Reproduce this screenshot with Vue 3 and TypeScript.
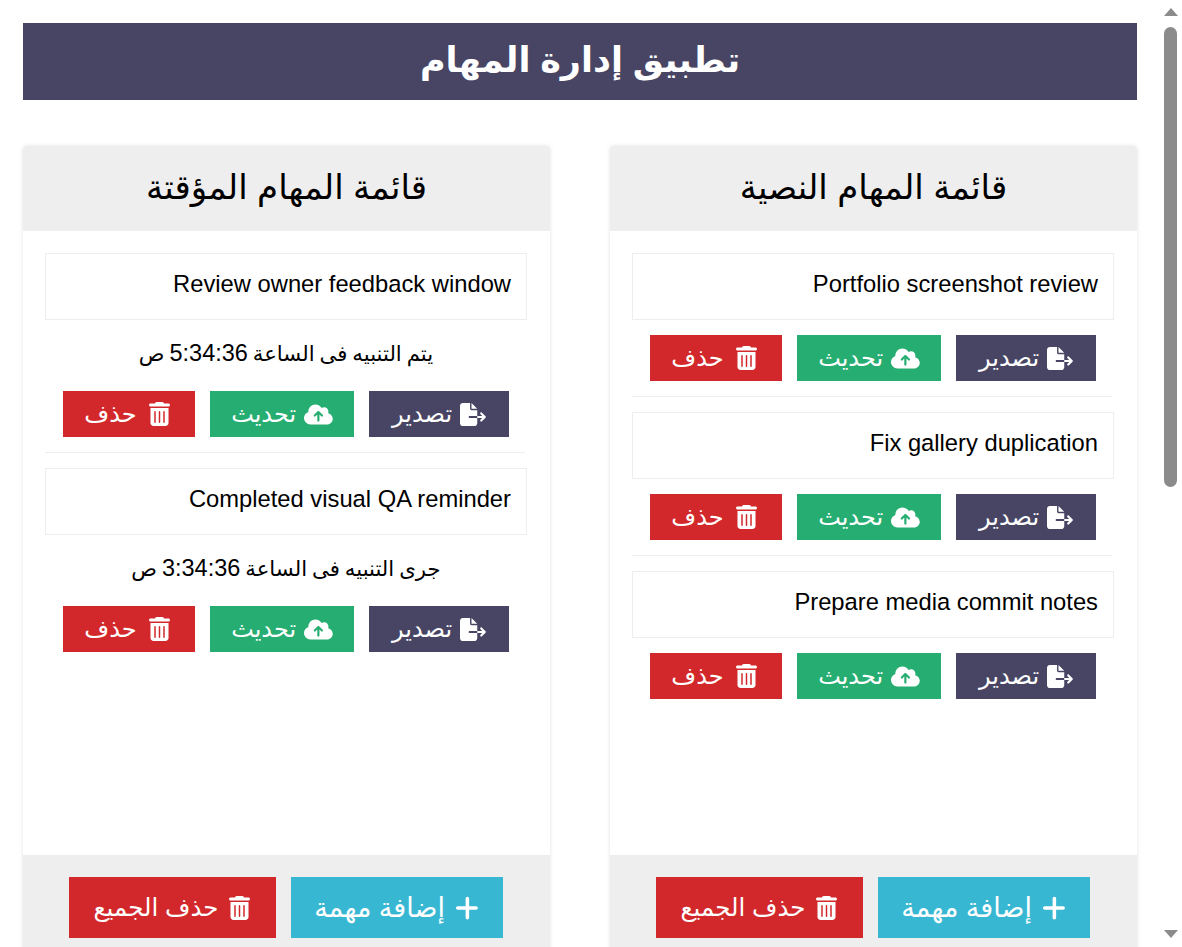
<script setup lang="ts">
interface Task { text: string; alarm?: { label: string; time: string } }
const lists: { title: string; tasks: Task[] }[] = [
  {
    title: 'قائمة المهام النصية',
    tasks: [
      { text: 'Portfolio screenshot review' },
      { text: 'Fix gallery duplication' },
      { text: 'Prepare media commit notes' },
    ],
  },
  {
    title: 'قائمة المهام المؤقتة',
    tasks: [
      { text: 'Review owner feedback window', alarm: { label: 'يتم التنبيه فى الساعة', time: '5:34:36' } },
      { text: 'Completed visual QA reminder', alarm: { label: 'جرى التنبيه فى الساعة', time: '3:34:36' } },
    ],
  },
]
const icons = {
  exportFile: { box: '0 0 576 512', d: 'M0 64C0 28.7 28.7 0 64 0H224V128c0 17.7 14.3 32 32 32H384V288H216c-13.3 0-24 10.7-24 24s10.7 24 24 24H384V448c0 35.3-28.7 64-64 64H64c-35.3 0-64-28.7-64-64V64zM384 336V288H494.1l-39-39c-9.4-9.4-9.4-24.6 0-33.9s24.6-9.4 33.9 0l80 80c9.4 9.4 9.4 24.6 0 33.9l-80 80c-9.4 9.4-24.6 9.4-33.9 0s-9.4-24.6 0-33.9l39-39H384zm0-208H256V0L384 128z' },
  cloud: { box: '0 0 640 512', d: 'M144 480C64.5 480 0 415.5 0 336c0-62.8 40.2-116.2 96.2-135.9c-.1-2.7-.2-5.4-.2-8.1c0-88.4 71.6-160 160-160c59.3 0 111 32.2 138.7 80.2C409.9 102 428.3 96 448 96c53 0 96 43 96 96c0 12.2-2.3 23.8-6.4 34.6C596 238.4 640 290.1 640 352c0 70.7-57.3 128-128 128H144zm79-217c-9.4 9.4-9.4 24.6 0 33.9s24.6 9.4 33.9 0l39-39V392c0 13.3 10.7 24 24 24s24-10.7 24-24V257.9l39 39c9.4 9.4 24.6 9.4 33.9 0s9.4-24.6 0-33.9l-80-80c-9.4-9.4-24.6-9.4-33.9 0l-80 80z' },
  trash: { box: '0 0 448 512', d: 'M135.2 17.7C140.6 6.8 151.7 0 163.8 0H284.2c12.1 0 23.2 6.8 28.6 17.7L320 32h96c17.7 0 32 14.3 32 32s-14.3 32-32 32H32C14.3 96 0 81.7 0 64S14.3 32 32 32h96l7.2-14.3zM32 128H416V448c0 35.3-28.7 64-64 64H96c-35.3 0-64-28.7-64-64V128zm96 64c-8.8 0-16 7.2-16 16V432c0 8.8 7.2 16 16 16s16-7.2 16-16V208c0-8.8-7.2-16-16-16zm96 0c-8.8 0-16 7.2-16 16V432c0 8.8 7.2 16 16 16s16-7.2 16-16V208c0-8.8-7.2-16-16-16zm96 0c-8.8 0-16 7.2-16 16V432c0 8.8 7.2 16 16 16s16-7.2 16-16V208c0-8.8-7.2-16-16-16z' },
  plus: { box: '16 0 416 512', d: 'M256 80c0-17.7-14.3-32-32-32s-32 14.3-32 32V224H48c-17.7 0-32 14.3-32 32s14.3 32 32 32H192V432c0 17.7 14.3 32 32 32s32-14.3 32-32V288H384c17.7 0 32-14.3 32-32s-14.3-32-32-32H256V80z' },
}
</script>

<template>
  <div class="page" dir="rtl">
    <h1 class="app-title">تطبيق إدارة المهام</h1>
    <div class="columns">
      <section v-for="list in lists" :key="list.title" class="card">
        <h2 class="card-title">{{ list.title }}</h2>
        <div class="card-body">
          <div v-for="task in list.tasks" :key="task.text" class="task">
            <div class="task-text">{{ task.text }}</div>
            <p v-if="task.alarm" class="alarm">{{ task.alarm.label }} <span class="time">{{ task.alarm.time }}</span> ص</p>
            <div class="actions">
              <button class="btn navy w-export">
                <svg class="icon small" :viewBox="icons.exportFile.box"><path :d="icons.exportFile.d" /></svg>
                تصدير
              </button>
              <button class="btn green w-update">
                <svg class="icon small" :viewBox="icons.cloud.box"><path :d="icons.cloud.d" /></svg>
                تحديث
              </button>
              <button class="btn red w-delete">
                <svg class="icon" :viewBox="icons.trash.box"><path :d="icons.trash.d" /></svg>
                حذف
              </button>
            </div>
          </div>
        </div>
        <div class="card-footer">
          <button class="btn big cyan w-add">
            <svg class="icon plus" :viewBox="icons.plus.box"><path :d="icons.plus.d" /></svg>
            <span class="add-label">إضافة مهمة</span>
          </button>
          <button class="btn big red w-clear">
            <svg class="icon" :viewBox="icons.trash.box"><path :d="icons.trash.d" /></svg>
            حذف الجميع
          </button>
        </div>
      </section>
    </div>
    <div class="scrollbar" dir="ltr" aria-hidden="true">
      <span class="arrow up"></span>
      <span class="thumb"></span>
      <span class="spacer"></span>
      <span class="arrow down"></span>
    </div>
  </div>
</template>

<style scoped>
.page {
  box-sizing: border-box;
  padding: 23px 45px 0 23px;
  font-family: "Liberation Sans", "DejaVu Sans", sans-serif;
  color: #000;
}
.app-title {
  margin: 0 0 46px;
  height: 77px;
  line-height: 73px;
  background: #474563;
  color: #fff;
  text-align: center;
  font-size: 35px;
  font-weight: 700;
}
.columns {
  display: grid;
  grid-template-columns: 527px 527px;
  gap: 60px;
}
.card {
  border-radius: 4px;
  background: #fff;
  box-shadow: 0 0 4px rgba(0, 0, 0, 0.12);
  overflow: hidden;
}
.card-title {
  margin: 0;
  height: 85px;
  line-height: 83px;
  background: #eee;
  text-align: center;
  font-size: 34px;
  font-weight: 400;
}
.card-body {
  box-sizing: border-box;
  height: 624px;
  padding: 22px 23px 0 22px;
}
.task {
  margin-bottom: 15px;
}
.task::after {
  content: "";
  display: block;
  height: 1px;
  margin-top: 15px;
  margin-inline-start: 2px;
  background: #eee;
}
.task:last-child::after {
  display: none;
}
.task-text {
  box-sizing: border-box;
  height: 67px;
  padding: 14px 15px 0;
  border: 1px solid #eee;
  font-size: 23.75px;
  line-height: 32px;
}
.alarm {
  margin: 0;
  height: 71px;
  line-height: 66px;
  text-align: center;
  font-size: 21.25px;
  word-spacing: -1px;
}
.time {
  font-size: 23.5px;
}
.actions {
  display: flex;
  justify-content: center;
  gap: 15px;
  margin-top: 15px;
}
.alarm + .actions {
  margin-top: 0;
}
.btn {
  display: inline-flex;
  align-items: center;
  justify-content: center;
  gap: 8px;
  height: 46px;
  padding: 0;
  border: 0;
  color: #fff;
  font-family: inherit;
  font-size: 24px;
}
.w-export { width: 140px; }
.w-update { width: 144px; }
.w-delete { width: 132px; gap: 12px; padding-right: 4px; }
.big {
  height: 61px;
  gap: 11px;
  font-size: 24.5px;
}
.w-add { width: 212px; }
.w-clear { width: 207px; }
.add-label {
  font-size: 27px;
}
.icon {
  height: 24px;
  fill: currentColor;
  flex: none;
}
.icon.small {
  height: 23px;
}
.icon.plus {
  height: 28px;
}
.navy { background: #474563; }
.green { background: #26ad71; }
.red { background: #d3282b; }
.cyan { background: #38b7d3; }
.card-footer {
  display: flex;
  justify-content: center;
  gap: 15px;
  padding: 22px 23px 22px 21px;
  background: #eee;
}
.scrollbar {
  position: fixed;
  top: 0;
  right: 0;
  bottom: 0;
  width: 18px;
  display: flex;
  flex-direction: column;
  background: #fff;
}
.thumb {
  width: 13px;
  height: 460px;
  margin-top: 11px;
  background: #8b8b8b;
  border-radius: 7px;
}
.spacer {
  flex: 1;
}
.arrow {
  width: 0;
  height: 0;
  border-left: 7px solid transparent;
  border-right: 7px solid transparent;
}
.arrow.up {
  margin-top: 8px;
  border-bottom: 8px solid #8b8b8b;
}
.arrow.down {
  margin-bottom: 9px;
  border-top: 8px solid #8b8b8b;
}
</style>
